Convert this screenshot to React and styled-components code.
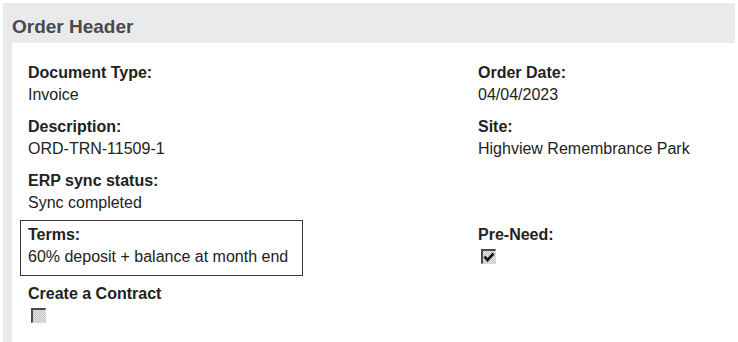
import React from 'react';
import styled, { createGlobalStyle } from 'styled-components';

const GlobalStyle = createGlobalStyle`
  html, body {
    margin: 0;
    padding: 0;
    background: #fff;
    overflow: hidden;
  }
  body {
    font-family: "Liberation Sans", Arial, sans-serif;
  }
`;

const Panel = styled.section`
  margin: 3px 3px 0 3px;
  background: #e9eaec;
  padding-left: 9px;
  height: calc(100vh - 3px);
  display: flex;
  flex-direction: column;
`;

const PanelTitle = styled.h2`
  margin: 0;
  height: 40px;
  display: flex;
  align-items: center;
  padding-top: 7px;
  box-sizing: border-box;
  font-size: 19px;
  font-weight: bold;
  color: #494949;
`;

const Content = styled.div`
  flex: 1;
  background: #fff;
  padding: 15px 8px 0 8px;
  display: grid;
  grid-template-columns: 450px 1fr;
  align-content: start;
`;

const Field = styled.div`
  padding: ${p => (p.$boxed ? '3px 14px 7px 7px' : '4px 8px 6px 8px')};
  border: ${p => (p.$boxed ? '1px solid #3a3a3a' : 'none')};
  margin-bottom: ${p => (p.$boxed ? '3px' : '0')};
  justify-self: start;
  min-height: 44px;
`;

const Label = styled.div`
  font-size: 16px;
  line-height: 22px;
  font-weight: bold;
  color: #222;
`;

const Value = styled.div`
  font-size: 16px;
  line-height: 22px;
  color: #222;
  height: 22px;
`;

const Box = styled.span`
  display: inline-block;
  width: 15px;
  height: 15px;
  box-sizing: border-box;
  margin: 3px 0 0 3px;
  border-top: 2px solid #4a4a4a;
  border-left: 2px solid #4a4a4a;
  border-right: 1px solid #d8d8d8;
  border-bottom: 1px solid #d8d8d8;
  background: repeating-conic-gradient(#bdbdbd 0 25%, #ececec 0 50%) 0 0 / 2px 2px;
  position: relative;
  vertical-align: top;

  svg {
    position: absolute;
    left: 0;
    top: 0;
  }
`;

const CheckBox = ({ checked }) => (
  <Box>
    {checked && (
      <svg width="12" height="12" viewBox="0 0 12 12">
        <polyline
          points="1.5,5.5 4.5,9 10.5,2.5"
          fill="none"
          stroke="#111"
          strokeWidth="2.6"
        />
      </svg>
    )}
  </Box>
);

const Empty = styled.div``;

export default function App() {
  return (
    <>
      <GlobalStyle />
      <Panel>
        <PanelTitle>Order Header</PanelTitle>
        <Content>
          <Field>
            <Label>Document Type:</Label>
            <Value>Invoice</Value>
          </Field>
          <Field>
            <Label>Order Date:</Label>
            <Value>04/04/2023</Value>
          </Field>

          <Field>
            <Label>Description:</Label>
            <Value>ORD-TRN-11509-1</Value>
          </Field>
          <Field>
            <Label>Site:</Label>
            <Value>Highview Remembrance Park</Value>
          </Field>

          <Field>
            <Label>ERP sync status:</Label>
            <Value>Sync completed</Value>
          </Field>
          <Empty />

          <Field $boxed>
            <Label>Terms:</Label>
            <Value>60% deposit + balance at month end</Value>
          </Field>
          <Field>
            <Label>Pre-Need:</Label>
            <Value>
              <CheckBox checked />
            </Value>
          </Field>

          <Field>
            <Label>Create a Contract</Label>
            <Value>
              <CheckBox />
            </Value>
          </Field>
        </Content>
      </Panel>
    </>
  );
}
